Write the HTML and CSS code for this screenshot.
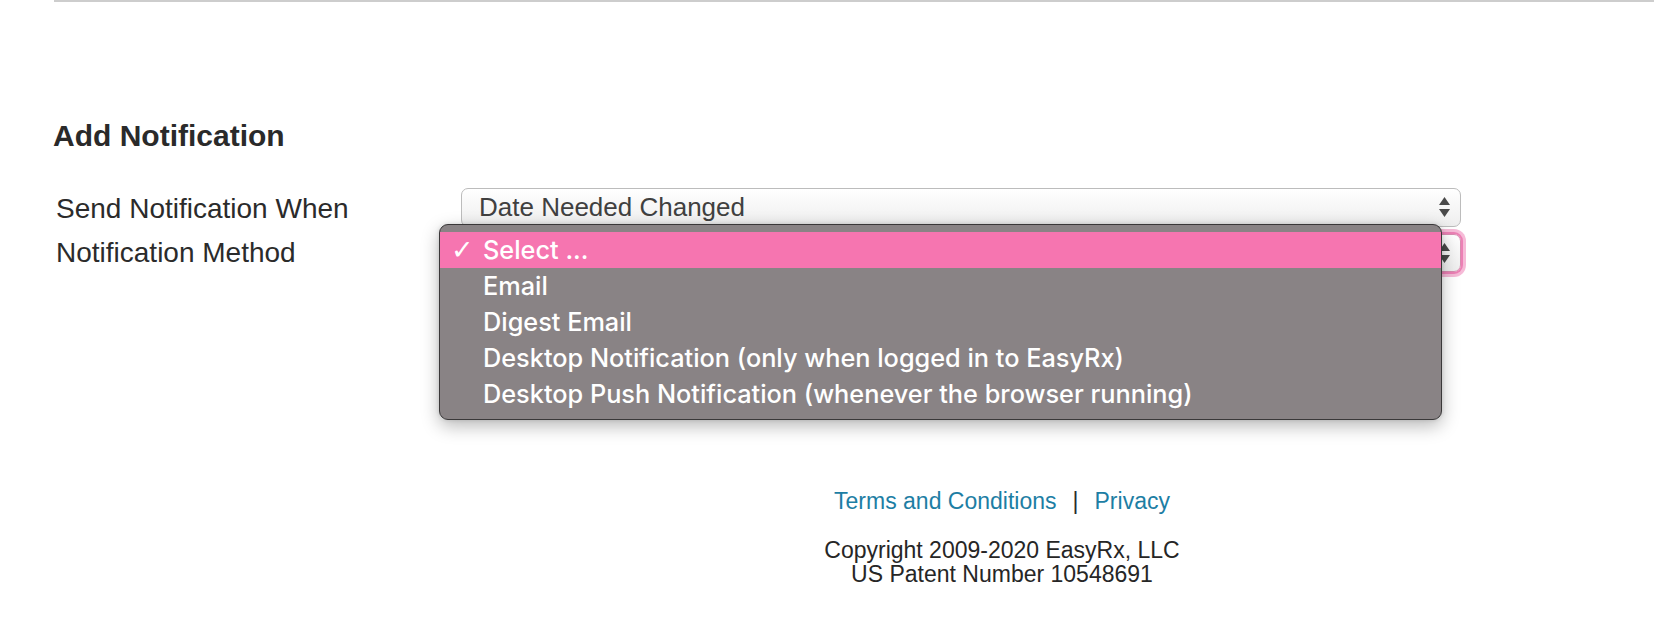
FILE: index.html
```html
<!DOCTYPE html>
<html lang="en">
<head>
<meta charset="utf-8">
<title>Add Notification</title>
<link rel="stylesheet" href="styles.css">
</head>
<body>
<div class="page">
  <div class="rule"></div>
  <main class="content">
    <h2 class="title">Add Notification</h2>
    <div class="form">
      <div class="row row-first">
        <label class="label">Send Notification When</label>
        <div class="select">
          <span class="select-text">Date Needed Changed</span>
          <svg class="arrows" viewBox="0 0 11 21" width="11" height="21"><polygon points="0,8 5.5,0 11,8"/><polygon points="0,12 5.5,20 11,12"/></svg>
        </div>
      </div>
      <div class="row row-second">
        <label class="label">Notification Method</label>
        <div class="select select-focus">
          <span class="select-text">Select ...</span>
          <svg class="arrows" viewBox="0 0 11 21" width="11" height="21"><polygon points="0,8 5.5,0 11,8"/><polygon points="0,12 5.5,20 11,12"/></svg>
        </div>
      </div>
      <ul class="menu">
        <li class="menu-item menu-item-active"><span class="check">✓</span><span>Select ...</span></li>
        <li class="menu-item"><span class="check"></span><span>Email</span></li>
        <li class="menu-item"><span class="check"></span><span>Digest Email</span></li>
        <li class="menu-item"><span class="check"></span><span>Desktop Notification (only when logged in to EasyRx)</span></li>
        <li class="menu-item"><span class="check"></span><span>Desktop Push Notification (whenever the browser running)</span></li>
      </ul>
    </div>
  </main>
  <footer class="footer">
    <div class="links"><a href="#" class="link">Terms and Conditions</a><span class="sep">|</span><a href="#" class="link">Privacy</a></div>
    <div class="copy">Copyright 2009-2020 EasyRx, LLC<br>US Patent Number 10548691</div>
  </footer>
</div>
</body>
</html>
```
FILE: styles.css
```css
* { box-sizing: border-box; }
html, body { margin: 0; padding: 0; background: #ffffff; }
body { font-family: "Liberation Sans", Arial, sans-serif; color: #2b2b2b; }

.page { width: 1654px; height: 642px; overflow: hidden; }

.rule {
  margin-left: 54px;
  height: 2px;
  background: #cdcdcd;
}

.content { padding-left: 53px; }

.title {
  margin: 117px 0 35px 0;
  font-size: 30px;
  line-height: 34px;
  font-weight: bold;
  color: #2a2a2a;
}

.form { position: relative; }

.row {
  display: grid;
  grid-template-columns: 408px 1000px;
  align-items: start;
}
.row-second { margin-top: 6px; }

.label {
  padding-left: 3px;
  font-size: 28px;
  line-height: 39px;
  color: #2b2b2b;
}
.row-first .label { margin-top: 1px; }
.row-second .label { line-height: 37px; }

.select {
  height: 39px;
  display: flex;
  align-items: center;
  justify-content: space-between;
  padding: 0 10px 0 17px;
  border: 1px solid #bcbcbc;
  border-radius: 7px;
  background: linear-gradient(#ffffff, #eeeeee);
}
.select-text {
  font-size: 26px;
  line-height: 37px;
  color: #404040;
}
.arrows { fill: #4a4a4a; display: block; }

.select-focus {
  height: 38px;
  border-color: #d98cb0;
  box-shadow: 0 0 0 2px #ec80b5, 0 0 0 5px rgba(238, 130, 182, 0.55);
}

.menu {
  position: absolute;
  left: 386px;
  top: 36px;
  width: 1003px;
  height: 196px;
  margin: 0;
  padding: 7px 0;
  list-style: none;
  background: #898385;
  border: 1px solid #3a3839;
  border-radius: 9px;
  box-shadow: 0 6px 18px rgba(0, 0, 0, 0.28), 0 0 4px rgba(0, 0, 0, 0.12);
}
.menu-item {
  display: flex;
  align-items: center;
  height: 36px;
  padding-left: 11px;
  font-family: Inter, "Liberation Sans", sans-serif;
  font-weight: 500;
  font-size: 25.3px;
  line-height: 36px;
  color: #ffffff;
  white-space: nowrap;
}
.menu-item-active { background: #f675b0; }
.check {
  width: 32px;
  flex: none;
  font-family: "DejaVu Sans", sans-serif;
  font-size: 27px;
  font-weight: normal;
}

.footer {
  margin-top: 216px;
  padding-left: 350px;
  text-align: center;
  font-size: 23px;
}
.links { line-height: 26px; }
.link { color: #1d7ea4; text-decoration: none; }
.sep { color: #2b2b2b; margin: 0 16px; }
.copy {
  margin-top: 24px;
  line-height: 24px;
  color: #262626;
}
```
